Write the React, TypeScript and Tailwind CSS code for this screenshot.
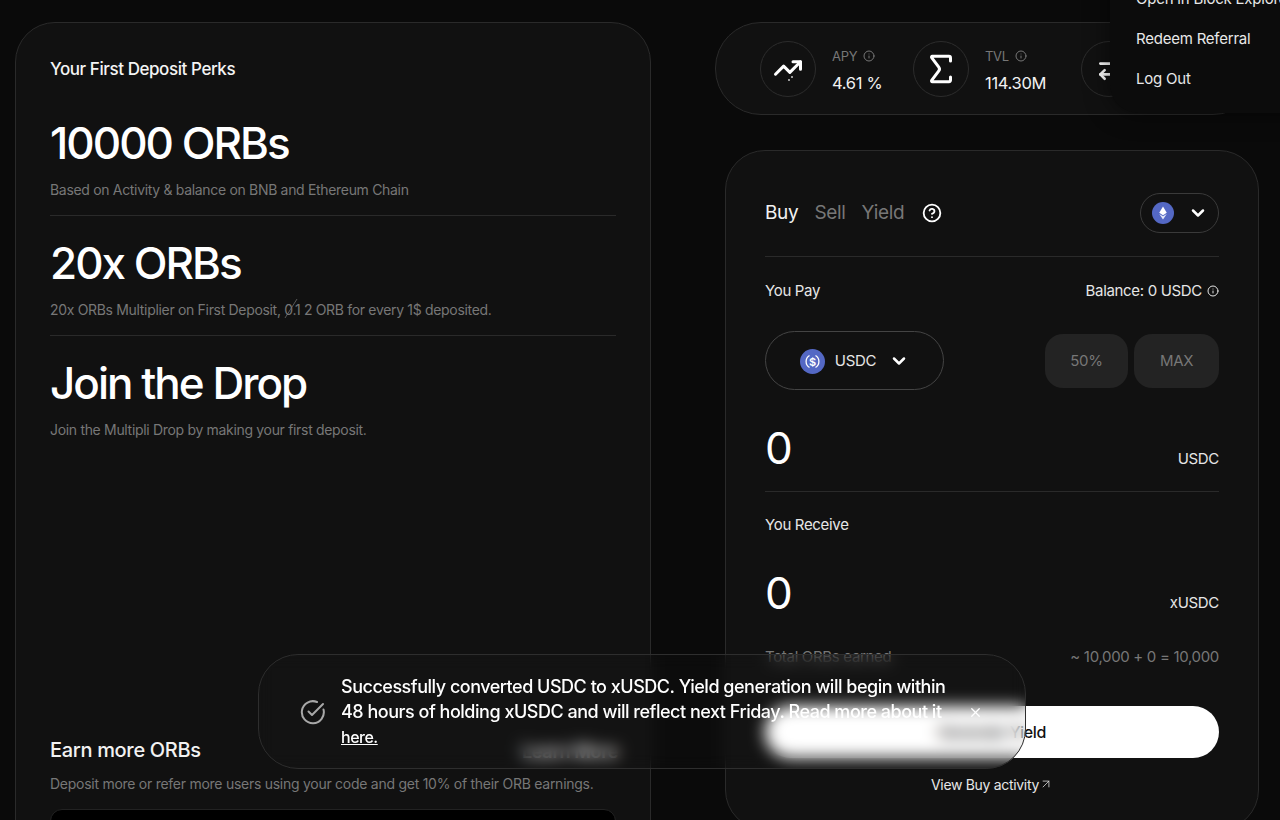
import { ArrowRightLeft, ArrowUpRight, ChevronDown, CircleHelp, Info, Sigma, TrendingUp, X } from "lucide-react"

const perks = [
  { title: "10000 ORBs", text: "Based on Activity & balance on BNB and Ethereum Chain" },
  { title: "20x ORBs", text: "" },
  { title: "Join the Drop", text: "Join the Multipli Drop by making your first deposit." },
]

const UsdcIcon = () => (
  <svg width="25" height="25" viewBox="0 0 25 25">
    <circle cx="12.5" cy="12.5" r="12.5" fill="#5468c4" />
    <path d="M9.5 6.5a7 7 0 0 0 0 12M15.5 6.5a7 7 0 0 1 0 12" fill="none" stroke="#fff" strokeWidth="1.3" />
    <text x="12.5" y="16.5" textAnchor="middle" fontSize="11" fontWeight="600" fill="#fff">$</text>
  </svg>
)

const EthIcon = () => (
  <svg width="22" height="22" viewBox="0 0 20 20">
    <circle cx="10" cy="10" r="10" fill="#5468c4" />
    <path d="M10 4l3.4 5.8L10 12 6.600 9.800z" fill="#fff" />
    <path d="M10 13l3.400-2.200L10 16l-3.400-5.200z" fill="#e4e7f8" />
  </svg>
)

const StatCircle = ({ children }: { children: React.ReactNode }) => (
  <div className="relative flex h-[56px] w-[56px] shrink-0 items-center justify-center rounded-full border border-[#2c2c2c] text-white">
    {children}
  </div>
)

const Stat = ({ label, value }: { label: string; value: string }) => (
  <div className="ml-[16px] w-[81px] pt-[3px]">
    <div className="flex items-center gap-[6px] text-[13px] leading-[18px] text-[#777]">
      {label}
      <Info size={12} />
    </div>
    <div className="mt-[7px] text-[16.5px] leading-[22px] text-[#f2f2f2]">{value}</div>
  </div>
)

const App = () => {
  return (
    <div className="relative flex h-[820px] overflow-hidden bg-[#0a0a0a] pl-[15px] pt-[22px] font-['Inter',sans-serif] tracking-[-0.02em] text-white">
      {/* perks */}
      <div className="h-[840px] w-[636px] shrink-0 rounded-[40px] border border-[#2a2a2a] bg-[#111111] px-[34px] pt-[35px]">
        <h2 className="text-[17px] font-medium leading-[22px] tracking-[-0.025em] text-[#f4f4f4]">Your First Deposit Perks</h2>
        <div className="mt-[16px]">
          {perks.map((perk, i) => (
            <div key={perk.title} className={i < 2 ? "h-[120px] border-b border-[#2a2a2a] pt-[19px]" : "h-[120px] pt-[19px]"}>
              <div className="text-[44px] font-medium leading-[56px] tracking-[-0.045em]">{perk.title}</div>
              <p className="mt-[9px] text-[14px] leading-[20px] text-[#777]">
                {i === 1 ? (
                  <>
                    20x ORBs Multiplier on First Deposit,{" "}
                    <span className="relative">
                      0.1
                      <svg className="absolute left-[0px] top-[-3px]" width="16" height="22" viewBox="0 0 16 22">
                        <path d="M1 20L13 1" stroke="#777" strokeWidth="0.7" />
                      </svg>
                    </span>{" "}
                    2 ORB for every 1$ deposited.
                  </>
                ) : (
                  perk.text
                )}
              </p>
            </div>
          ))}
        </div>
        <h3 className="mt-[280px] text-[20px] font-medium leading-[28px] text-[#f2f2f2]">Earn more ORBs</h3>
        <p className="mt-[10px] text-[14px] leading-[20px] tracking-[-0.019em] text-[#777]">
          Deposit more or refer more users using your code and get 10% of their ORB earnings.
        </p>
        <div className="mt-[15px] h-[60px] rounded-[12px] border border-[#222] bg-black" />
      </div>

      {/* right column */}
      <div className="ml-[64px] w-[544px] shrink-0">
        <div className="flex h-[93px] items-center rounded-[46px] border border-[#2a2a2a] bg-[#111111] pl-[44px]">
          <StatCircle>
            <TrendingUp size={30} strokeWidth={2.4} className="-translate-y-[1px]" />
            <span className="absolute left-[27px] top-[37px] h-[2px] w-[2px] bg-[#999]" />
            <span className="absolute left-[30px] top-[34px] h-[2px] w-[2px] bg-[#999]" />
          </StatCircle>
          <Stat label="APY" value="4.61 %" />
          <StatCircle>
            <Sigma size={38} strokeWidth={1.9} />
          </StatCircle>
          <Stat label="TVL" value="114.30M" />
          <div className="ml-[15px]">
            <StatCircle>
              <ArrowRightLeft size={26} strokeWidth={2.4} />
            </StatCircle>
          </div>
        </div>

        <div className="ml-[10px] mt-[35px] h-[680px] w-[534px] rounded-[40px] border border-[#2a2a2a] bg-[#111111] px-[39px] pt-[42px]">
          <div className="flex h-[40px] items-center">
            <span className="pt-[1px] text-[19px] text-[#f2f2f2]">Buy</span>
            <span className="ml-[16px] pt-[1px] text-[19px] text-[#777]">Sell</span>
            <span className="ml-[16px] pt-[1px] text-[19px] text-[#777]">Yield</span>
            <CircleHelp size={20} strokeWidth={2.2} className="ml-[18px] text-white" />
            <div className="ml-auto flex h-[40px] w-[79px] items-center justify-center gap-[14px] rounded-full border border-[#3a3a3a]">
              <EthIcon />
              <ChevronDown size={20} strokeWidth={3} />
            </div>
          </div>
          <div className="mt-[23px] border-t border-[#2a2a2a]" />
          <div className="mt-[24px] flex items-center justify-between text-[15px] leading-[20px] text-[#e6e6e6]">
            <span>You Pay</span>
            <span className="flex items-center gap-[5px]">
              Balance: 0 USDC <Info size={12} />
            </span>
          </div>
          <div className="mt-[30px] flex items-center">
            <div className="flex h-[59px] w-[179px] items-center justify-center rounded-full border border-[#444] pt-[1px]">
              <UsdcIcon />
              <span className="ml-[10px] text-[15px] text-[#e6e6e6]">USDC</span>
              <ChevronDown size={20} strokeWidth={3} className="ml-[13px]" />
            </div>
            <div className="ml-auto flex gap-[6px]">
              <div className="flex h-[54px] w-[83px] items-center justify-center rounded-[18px] bg-[#232323] pt-[1px] text-[15px] text-[#777]">50%</div>
              <div className="flex h-[54px] w-[85px] items-center justify-center rounded-[18px] bg-[#232323] pt-[1px] text-[15px] text-[#777]">MAX</div>
            </div>
          </div>
          <div className="mt-[28px] flex h-[74px] items-start justify-between border-b border-[#2a2a2a]">
            <span className="text-[44px] leading-[60px]">0</span>
            <span className="mt-[31px] text-[15px] leading-[20px] text-[#e6e6e6]">USDC</span>
          </div>
          <div className="mt-[23px] text-[15px] leading-[20px] text-[#e6e6e6]">You Receive</div>
          <div className="mt-[28px] flex items-start justify-between">
            <span className="text-[44px] leading-[60px]">0</span>
            <span className="mt-[30px] text-[15px] leading-[20px] text-[#e6e6e6]">xUSDC</span>
          </div>
          <div className="mt-[24px] flex justify-between text-[15px] leading-[20px] text-[#777]">
            <span>Total ORBs earned</span>
            <span>~ 10,000 + 0 = 10,000</span>
          </div>
          <button className="mt-[39px] flex h-[52px] w-full items-center justify-center rounded-full bg-white text-[16px] font-medium text-[#111]">
            Generate Yield
          </button>
          <div className="mt-[17px] flex items-center justify-center text-[14px] leading-[20px] text-[#e6e6e6]">
            View Buy activity
            <ArrowUpRight size={14} strokeWidth={1.3} className="-translate-y-[1px]" />
          </div>
        </div>
      </div>

      {/* "Learn More" sits under the toast, only its blur shows */}
      <div className="absolute left-[525px] top-[739px] flex h-[24px] w-[90px] items-center justify-center whitespace-nowrap text-[18px] font-semibold text-[#eee]">
        Learn More
      </div>

      {/* account menu */}
      <div className="absolute -top-[33px] left-[1110px] h-[146px] w-[200px] rounded-bl-[28px] bg-[#0c0c0c] pl-[26px] pt-[12px] text-[15px] leading-[40px] tracking-[-0.015em] text-[#e8e8e8] shadow-[0_0_24px_rgba(0,0,0,0.5)]">
        <div className="whitespace-nowrap">Open in Block Explorer</div>
        <div>Redeem Referral</div>
        <div>Log Out</div>
      </div>

      {/* toast */}
      <div className="absolute left-[258px] top-[654px] flex h-[115px] w-[768px] items-center rounded-[40px] border border-[#2e2e2e] bg-white/[0.01] pl-[41px] backdrop-blur-[8px]">
        <svg width="26" height="26" viewBox="0 0 26 26" fill="none" stroke="#a8a8a8" strokeWidth="2" strokeLinecap="round" strokeLinejoin="round" className="shrink-0">
          <path d="M23.500 10.500A11 11 0 1 1 17 3" />
          <path d="M8.500 12.500l3.500 3.500 11-11" />
        </svg>
        <p className="ml-[15px] w-[620px] text-[18px] font-medium leading-[25px] tracking-[-0.027em] text-white">
          Successfully converted USDC to xUSDC. Yield generation will begin within 48 hours of holding xUSDC and will reflect next Friday. Read more about it{" "}
          <span className="text-[16px] underline">here.</span>
        </p>
        <X size={15} className="absolute left-[709px] top-[50px] text-white" />
      </div>
    </div>
  )
}

export default App
